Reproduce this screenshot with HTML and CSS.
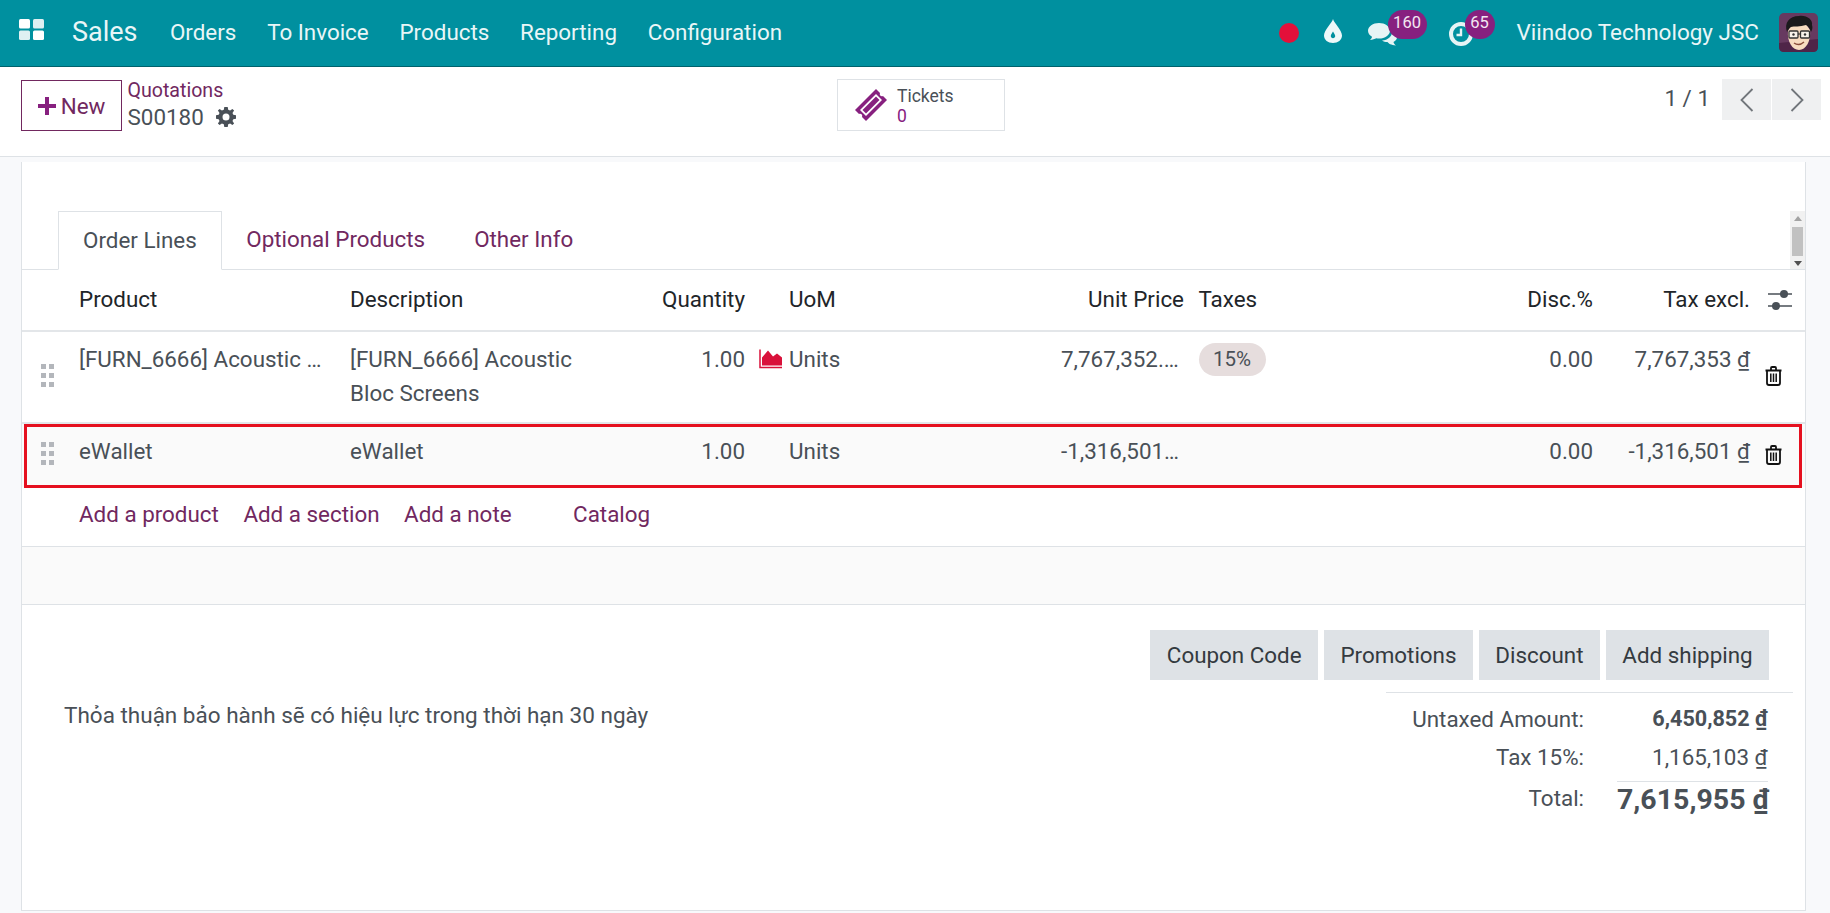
FILE: index.html
```html
<!DOCTYPE html>
<html lang="en">
<head>
<meta charset="utf-8">
<title>S00180 - Sales</title>
<link rel="stylesheet" href="styles.css">
</head>
<body>
<header class="navbar">
  <svg class="apps-icon" viewBox="0 0 25 21" aria-hidden="true">
    <rect x="0" y="0" width="11" height="9.5" rx="1.5" fill="#fff"/>
    <rect x="14" y="0" width="11" height="9.5" rx="1.5" fill="#dff0f2"/>
    <rect x="0" y="11.5" width="11" height="9.5" rx="1.5" fill="#dff0f2"/>
    <rect x="14" y="11.5" width="11" height="9.5" rx="1.5" fill="#fff"/>
  </svg>
  <span class="brand">Sales</span>
  <nav class="menu">
    <a>Orders</a><a>To Invoice</a><a>Products</a><a>Reporting</a><a>Configuration</a>
  </nav>
  <div class="systray">
    <span class="rec-dot"></span>
    <svg class="drop-icon" viewBox="0 0 18 24" aria-hidden="true">
      <path fill-rule="evenodd" fill="#eef8f9" d="M9 0C10 4 18 11 18 16.5C18 21 14 24 9 24C4 24 0 21 0 16.5C0 11 8 4 9 0ZM9 12.5C8 14.5 6.8 15.5 6.8 17C6.8 18.3 7.8 19.2 9 19.2C10.2 19.2 11.2 18.3 11.2 17C11.2 15.5 10 14.5 9 12.5Z"/>
    </svg>
    <div class="tray-item chat">
      <svg class="chat-icon" viewBox="0 0 29 24" aria-hidden="true">
        <path fill="#e6f4f5" d="M11 1C5 1 0 4.500 0 8.800C0 11.300 1.600 13.400 4 14.800C3.800 16 3 17.200 2 18C4.500 17.900 6.800 17 8.400 16.300C9.200 16.500 10.100 16.600 11 16.600C17 16.600 22 13.100 22 8.800C22 4.500 17 1 11 1Z"/>
        <path fill="#e6f4f5" d="M24 10C24 14.500 20 18.200 14 18.500C15.500 19.500 17.500 20 19.500 20C20.500 21.500 23 23 28 23.500C26.500 22.500 25.800 21.300 25.500 20C27.500 19 29 17.300 29 15.300C29 13 27 11 24 10Z"/>
      </svg>
      <span class="badge badge-chat">160</span>
    </div>
    <div class="tray-item clock">
      <svg class="clock-icon" viewBox="0 0 24 24" aria-hidden="true">
        <circle cx="12" cy="12" r="10" fill="none" stroke="#e6f4f5" stroke-width="4"/>
        <path d="M12 6.500V13H7.500" fill="none" stroke="#e6f4f5" stroke-width="2.400"/>
      </svg>
      <span class="badge badge-clock">65</span>
    </div>
    <span class="company">Viindoo Technology JSC</span>
    <svg class="avatar" viewBox="0 0 39 39" aria-label="User avatar">
      <rect width="39" height="39" rx="5" fill="#673a60"/>
      <path d="M0 30L39 26V34Q39 39 34 39H5Q0 39 0 34Z" fill="#4f2548"/>
      <path d="M9 18C8 28 13 37 20 37C27 37 32 28 31 17L27 11H13Z" fill="#f8dcc0"/>
      <path d="M8 19C5 10 10 3 20 3C28 2 34 7 33 12C34 15 33 17 32 19C31 16 30 14 27 12C21 14 15 13 12 14C10 15 9 17 8 19Z" fill="#1b1a1c"/>
      <rect x="10" y="18" width="9" height="7" rx="1" fill="#f7f2ea" stroke="#333" stroke-width="1.300"/>
      <rect x="21.500" y="18" width="9" height="7" rx="1" fill="#f7f2ea" stroke="#333" stroke-width="1.300"/>
      <path d="M19 21H21.500" stroke="#333" stroke-width="1.200"/>
      <circle cx="14.500" cy="21.500" r="1.200" fill="#333"/>
      <circle cx="26" cy="21.500" r="1.200" fill="#333"/>
      <path d="M15 30Q20 33.500 25 29" fill="none" stroke="#8a4c39" stroke-width="1.400"/>
    </svg>
  </div>
</header>

<section class="control-panel">
  <div class="cp-left">
    <button class="btn-new"><svg class="plus-icon" viewBox="0 0 18 18" aria-hidden="true"><path d="M7 0H11V7H18V11H11V18H7V11H0V7H7Z" fill="#87207f"/></svg>New</button>
    <div class="crumbs">
      <a class="crumb-link">Quotations</a>
      <div class="crumb-current">S00180
        <svg class="gear-icon" viewBox="0 0 20 20" aria-hidden="true">
          <g fill="#495057">
            <path fill-rule="evenodd" d="M8.300 0H11.700L12.200 2.700L14.100 3.500L16.400 1.900L18.100 3.600L16.500 5.900L17.300 7.800L20 8.300V11.700L17.300 12.200L16.500 14.100L18.100 16.400L16.400 18.100L14.100 16.500L12.200 17.300L11.700 20H8.300L7.800 17.300L5.900 16.500L3.600 18.100L1.900 16.400L3.500 14.100L2.700 12.200L0 11.700V8.300L2.700 7.800L3.500 5.900L1.900 3.600L3.600 1.900L5.900 3.500L7.800 2.700ZM10 6.500A3.500 3.500 0 1 0 10 13.500A3.500 3.500 0 1 0 10 6.500Z"/>
          </g>
        </svg>
      </div>
    </div>
  </div>
  <div class="stat-button">
    <svg class="ticket-icon" viewBox="0 0 32 32" aria-hidden="true">
      <path fill="#87207f" fill-rule="evenodd" d="M21 0L25 4C24 6 26 8 28 7L32 11L11 32L7 28C8 26 6 24 4 25L0 21ZM21 5L5 21L11 27L27 11Z"/>
      <path fill="#87207f" d="M21 7.500L24.500 11L11 24.500L7.500 21Z"/>
    </svg>
    <div class="stat-text">
      <span class="stat-label">Tickets</span>
      <span class="stat-value">0</span>
    </div>
  </div>
  <div class="pager">
    <span class="pager-count">1 / 1</span>
    <button class="pager-btn"><svg viewBox="0 0 14 24" aria-hidden="true"><path d="M12.500 1L1.500 12L12.500 23" fill="none" stroke="#71767b" stroke-width="1.800"/></svg></button>
    <button class="pager-btn"><svg viewBox="0 0 14 24" aria-hidden="true"><path d="M1.500 1L12.500 12L1.500 23" fill="none" stroke="#71767b" stroke-width="1.800"/></svg></button>
  </div>
</section>

<main class="content">
  <article class="sheet">
    <div class="tabs">
      <a class="tab active">Order Lines</a>
      <a class="tab">Optional Products</a>
      <a class="tab">Other Info</a>
      <div class="scrollbar">
        <span class="arrow-up"></span>
        <span class="thumb"></span>
        <span class="arrow-down"></span>
      </div>
    </div>

    <div class="lines-wrap">
      <table class="lines">
        <colgroup>
          <col class="c-handle"><col class="c-product"><col class="c-desc"><col class="c-qty"><col class="c-fc"><col class="c-uom"><col class="c-price"><col class="c-tax"><col class="c-disc"><col class="c-sub"><col class="c-act">
        </colgroup>
        <thead>
          <tr>
            <th></th><th>Product</th><th>Description</th><th class="num">Quantity</th><th></th><th>UoM</th><th class="num">Unit Price</th><th class="tax">Taxes</th><th class="num">Disc.%</th><th class="num">Tax excl.</th>
            <th class="act">
              <svg class="sliders-icon" viewBox="0 0 24 20" aria-hidden="true">
                <path d="M0 4H24M0 16H24" stroke="#495057" stroke-width="1.500"/>
                <circle cx="16" cy="4" r="4" fill="#495057"/><circle cx="8" cy="16" r="4" fill="#495057"/>
              </svg>
            </th>
          </tr>
        </thead>
        <tbody>
          <tr class="row-one">
            <td class="handle"><span class="grip"><i></i><i></i><i></i><i></i><i></i><i></i></span></td>
            <td><div class="trunc">[FURN_6666] Acoustic Bloc Screens</div></td>
            <td>[FURN_6666] Acoustic Bloc Screens</td>
            <td class="num">1.00</td>
            <td class="fc">
              <svg class="forecast-icon" viewBox="0 0 23 19" aria-hidden="true">
                <path d="M1 0V18H23" fill="none" stroke="#d9113a" stroke-width="1.500"/>
                <path d="M3 16V8L9 1L14 7L18 4L23 8V16Z" fill="#d9113a"/>
              </svg>
            </td>
            <td>Units</td>
            <td class="num"><div class="trunc">7,767,352.1739</div></td>
            <td class="tax"><span class="tax-tag">15%</span></td>
            <td class="num">0.00</td>
            <td class="num">7,767,353 <span class="cur">₫</span></td>
            <td class="act"><svg class="trash-icon" viewBox="0 0 17 20" aria-hidden="true"><use href="#trash"/></svg></td>
          </tr>
          <tr class="row-two">
            <td class="handle"><span class="grip"><i></i><i></i><i></i><i></i><i></i><i></i></span></td>
            <td>eWallet</td>
            <td>eWallet</td>
            <td class="num">1.00</td>
            <td></td>
            <td>Units</td>
            <td class="num"><div class="trunc">-1,316,501.7391</div></td>
            <td></td>
            <td class="num">0.00</td>
            <td class="num">-1,316,501 <span class="cur">₫</span></td>
            <td class="act"><svg class="trash-icon" viewBox="0 0 17 20" aria-hidden="true"><use href="#trash"/></svg></td>
          </tr>
          <tr class="row-add">
            <td></td>
            <td colspan="10">
              <div class="add-links"><a>Add a product</a><a>Add a section</a><a>Add a note</a><a class="catalog">Catalog</a></div>
            </td>
          </tr>
        </tbody>
      </table>
      <div class="highlight-box"></div>
    </div>

    <div class="band"></div>

    <div class="summary">
      <p class="note">Thỏa thuận bảo hành sẽ có hiệu lực trong thời hạn 30 ngày</p>
      <div class="summary-right">
        <div class="actions">
          <button>Coupon Code</button><button>Promotions</button><button>Discount</button><button>Add shipping</button>
        </div>
        <div class="totals">
          <span class="t-label">Untaxed Amount:</span><span class="t-val t-bold">6,450,852 <span class="cur">₫</span></span>
          <span class="t-label">Tax 15%:</span><span class="t-val">1,165,103 <span class="cur">₫</span></span>
          <span class="t-label t-total-label">Total:</span><span class="t-val t-grand">7,615,955 <span class="cur">₫</span></span>
        </div>
      </div>
    </div>
  </article>
</main>

<svg class="defs" aria-hidden="true">
  <symbol id="trash" viewBox="0 0 17 20">
    <path d="M0.500 4.500H16.500M6 4V2Q6 1 7 1H10Q11 1 11 2V4M2 5V17Q2 19 4 19H13Q15 19 15 17V5" fill="none" stroke="#111" stroke-width="1.800"/>
    <path d="M5.800 7.500V16M8.500 7.500V16M11.200 7.500V16" stroke="#111" stroke-width="1.500"/>
  </symbol>
</svg>
</body>
</html>
```

FILE: styles.css
```css
* { box-sizing: border-box; }
html, body { margin: 0; height: 100%; }
body {
  width: 1830px;
  height: 913px;
  overflow: hidden;
  display: flex;
  flex-direction: column;
  background: #f8f9fb;
  font-family: Roboto, "Noto Sans", sans-serif;
  font-size: 22.4px;
  color: #495057;
}
a { color: #71285f; text-decoration: none; }
button { font-family: inherit; border: 0; }
.defs { display: none; }

.navbar {
  height: 67px;
  flex: none;
  display: flex;
  align-items: center;
  background: #00909f;
  border-bottom: 1px solid #00626c;
  color: #e9f6f7;
  padding: 0 12px 0 19px;
}
.apps-icon { width: 25px; height: 21px; margin-top: -7px; }
.brand { font-size: 27px; margin-left: 28px; margin-top: -3px; }
.menu { display: flex; margin-left: 17px; margin-top: -3px; }
.menu a { color: #e9f6f7; font-size: 22.4px; padding: 0 15.400px; }
.systray { margin-left: auto; display: flex; align-items: center; }
.rec-dot { width: 20px; height: 20px; border-radius: 50%; background: #e3103a; }
.drop-icon { width: 18px; height: 24px; margin-left: 25px; margin-top: -5px; }
.tray-item { position: relative; }
.chat { margin-left: 26px; width: 29px; height: 24px; margin-top: 1px; }
.chat-icon { width: 29px; height: 24px; display: block; }
.clock { margin-left: 52px; width: 24px; height: 24px; margin-top: 1px; }
.clock-icon { width: 24px; height: 24px; display: block; }
.badge {
  position: absolute;
  top: -12px;
  height: 29px;
  border-radius: 15px;
  background: #87207f;
  color: #f3e7f2;
  font-size: 16.500px;
  line-height: 25px;
  text-align: center;
}
.badge-chat { left: 20px; width: 39px; }
.badge-clock { left: 16px; width: 30px; }
.company { font-size: 22.5px; margin-left: 44px; margin-top: -3px; }
.avatar { width: 39px; height: 39px; margin-left: 20px; margin-top: -2px; }

.control-panel {
  height: 90px;
  flex: none;
  background: #fff;
  border-bottom: 1px solid #dee2e6;
  padding: 12px 9px 0 21px;
  display: grid;
  grid-template-columns: 816px 168px 1fr;
  align-items: start;
}
.cp-left { display: flex; }
.btn-new {
  width: 101px;
  height: 51px;
  margin-top: 1px;
  background: #fff;
  border: 1px solid #71285f;
  color: #71285f;
  font-size: 22.4px;
  display: flex;
  align-items: center;
  justify-content: center;
  gap: 5px;
  padding: 0;
}
.plus-icon { width: 18px; height: 18px; }
.crumbs { margin-left: 5.500px; margin-top: 0; }
.crumb-link { display: block; font-size: 19.600px; line-height: 24px; }
.crumb-current { display: flex; align-items: center; font-size: 22.4px; line-height: 28px; }
.gear-icon { width: 20px; height: 20px; margin-left: 12px; }

.stat-button {
  height: 52px;
  background: #fff;
  border: 1px solid #dee2e6;
  display: flex;
  align-items: center;
  padding-left: 17px;
}
.ticket-icon { width: 32px; height: 32px; }
.stat-text { display: flex; flex-direction: column; margin-left: 10px; line-height: 20px; font-size: 17.500px; padding-top: 1px; }
.stat-value { color: #87207f; }

.pager { display: flex; justify-content: flex-end; align-items: flex-start; }
.pager-count { font-size: 22.4px; line-height: 38px; margin-right: 11px; color: #495057; }
.pager-btn {
  width: 49px;
  height: 41px;
  background: #eff0f1;
  margin-left: 1px;
  padding: 0;
  display: flex;
  align-items: center;
  justify-content: center;
}
.pager-btn svg { width: 14px; height: 24px; }

.content {
  flex: 1;
  min-height: 0;
  padding: 5px 24px 2px 21px;
  display: flex;
}
.sheet {
  flex: 1;
  background: #fff;
  border: 1px solid #dee2e6;
  border-top: 0;
  display: flex;
  flex-direction: column;
  padding-top: 49px;
}

.tabs {
  height: 59px;
  flex: none;
  display: flex;
  border-bottom: 1px solid #dee2e6;
  padding-left: 36px;
}
.tab {
  height: 59px;
  line-height: 56px;
  padding: 0 24.500px;
  font-size: 22.4px;
  color: #71285f;
}
.tab.active {
  color: #495057;
  background: #fff;
  border: 1px solid #dee2e6;
  border-bottom-color: #fff;
  padding: 0 24px;
}
.scrollbar {
  margin-left: auto;
  width: 15px;
  background: #f1f1f1;
  display: flex;
  flex-direction: column;
  align-items: center;
  justify-content: space-between;
  padding: 5px 0 3px;
}
.arrow-up, .arrow-down { width: 0; height: 0; border-left: 4px solid transparent; border-right: 4px solid transparent; }
.arrow-up { border-bottom: 5px solid #a3a3a3; }
.arrow-down { border-top: 5px solid #505050; }
.thumb { width: 11px; height: 29px; background: #c1c1c1; }

.lines-wrap { position: relative; }
.lines { width: 100%; border-collapse: collapse; table-layout: fixed; }
.c-handle { width: 48px; }
.c-product { width: 271px; }
.c-desc { width: 269px; }
.c-qty { width: 144px; }
.c-fc { width: 26px; }
.c-uom { width: 272px; }
.c-price { width: 141px; }
.c-tax { width: 227px; }
.c-disc { width: 182px; }
.c-sub { width: 157px; }
.c-act { width: 46px; }
.lines th {
  height: 61px;
  padding: 0 9px 3px;
  text-align: left;
  font-weight: 400;
  font-size: 22.4px;
  color: #212529;
  border-bottom: 2px solid #e3e6e9;
}
.lines td {
  padding: 10px 9px 0;
  line-height: 34px;
  font-size: 22.4px;
  vertical-align: top;
}
.lines .num { text-align: right; }
.lines .tax { padding-left: 5.500px; }
.lines td.tax { padding-top: 9px; }
.lines .act { padding: 0 0 2px 6px; text-align: left; vertical-align: middle; }
.lines th.act { padding: 0 0 0 9px; }
.lines .handle { padding: 0 0 4px 19px; vertical-align: middle; }
.lines .fc { padding: 17px 0 0 5px; }
.row-one { height: 92px; }
.row-one td { border-bottom: 2px solid #e3e6e9; }
.row-two { height: 64px; background: #fafafa; }
.row-add { height: 59px; border-bottom: 1px solid #dee2e6; }
.row-add td { padding-top: 10px; }
.trunc { white-space: nowrap; overflow: hidden; text-overflow: ellipsis; }
.grip { display: grid; grid-template-columns: 5px 5px; gap: 4px 3px; width: 13px; }
.grip i { width: 5px; height: 5px; background: #b3b6bb; }
.forecast-icon { width: 23px; height: 20px; display: block; }
.tax-tag {
  display: inline-block;
  height: 33px;
  width: 67px;
  border-radius: 17px;
  background: #e6dddd;
  text-align: center;
  line-height: 33px;
  font-size: 20.500px;
}
.cur { text-decoration: none; }
.trash-icon { width: 17px; height: 20px; display: block; margin-left: 0; }
.sliders-icon { width: 24px; height: 20px; display: block; }
.add-links { display: flex; }
.add-links a { margin-right: 24.500px; }
.add-links .catalog { margin-left: 37px; margin-right: 0; }
.highlight-box {
  position: absolute;
  left: 2px;
  right: 3px;
  top: 154px;
  height: 64px;
  border: 3px solid #e5101f;
  pointer-events: none;
}

.band { height: 58px; flex: none; background: #fafafa; border-bottom: 1px solid #dee2e6; }

.summary { flex: 1; display: flex; justify-content: space-between; }
.note { margin: 96px 0 0 42px; font-size: 22.5px; line-height: 28px; }
.summary-right { width: 407px; margin-right: 12px; display: flex; flex-direction: column; align-items: flex-end; padding-top: 25px; }
.actions { display: flex; gap: 6px; margin-right: 24px; flex: none; }
.actions button {
  height: 50px;
  padding: 0 16.400px;
  background: #dee2e6;
  color: #343a40;
  font-size: 22.4px;
  white-space: nowrap;
}
.totals {
  margin-top: 12px;
  align-self: stretch;
  border-top: 1px solid #dee2e6;
  padding-top: 7px;
  display: grid;
  grid-template-columns: 198px 183.500px;
  row-gap: 0;
  align-items: center;
}
.t-label { text-align: right; font-size: 22.4px; line-height: 38px; }
.t-val { text-align: right; font-size: 22.4px; line-height: 38px; }
.t-bold { font-weight: 700; font-size: 21.600px; }
.t-grand {
  font-weight: 700;
  font-size: 28.500px;
  line-height: 35px;
  border-top: 1px solid #dee2e6;
  margin: 5px 0 0 33px;
  white-space: nowrap;
}
.t-total-label { line-height: 35px; margin-top: 5px; }
```
